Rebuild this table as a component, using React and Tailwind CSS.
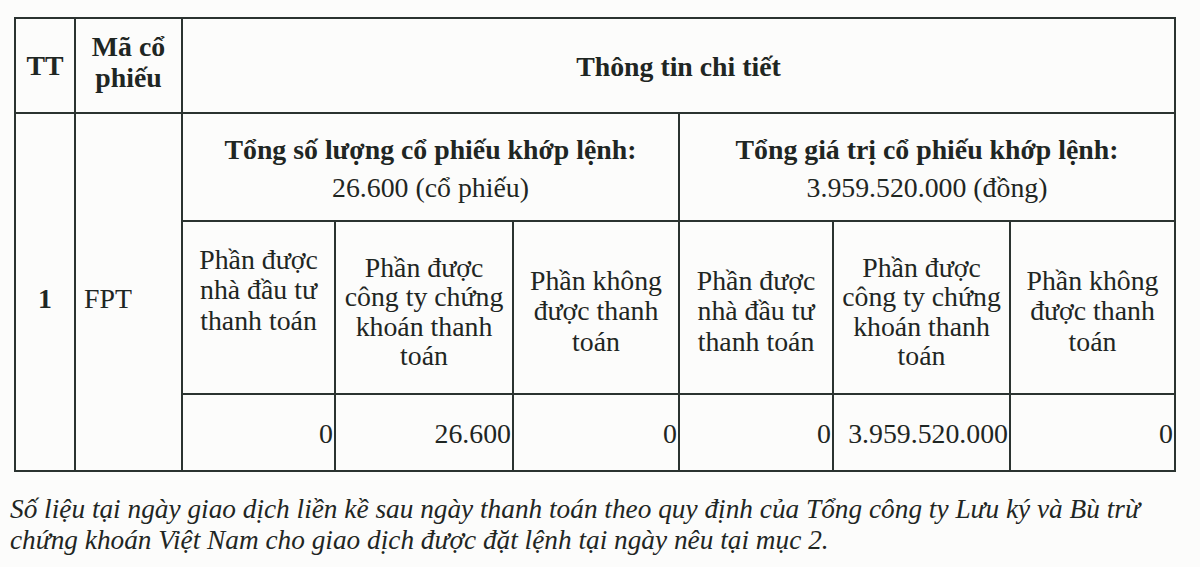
export default function App() {
  const b = "border-2 border-[#2b3330]";
  const hdr = ["Phần được nhà đầu tư thanh toán", "Phần được công ty chứng khoán thanh toán", "Phần không được thanh toán"];
  const hdrLines = [
    ["Phần được", "nhà đầu tư", "thanh toán"],
    ["Phần được", "công ty chứng", "khoán thanh", "toán"],
    ["Phần không", "được thanh", "toán"],
  ];
  const vals = ["0", "26.600", "0", "0", "3.959.520.000", "0"];
  return (
    <div
      className="w-[1200px] h-[567px] bg-[#fcfcfb] text-[#1f2623] overflow-hidden"
      style={{ fontFamily: '"Liberation Serif", "Times New Roman", serif' }}
    >
      <div className="pt-[17px] pl-[14px]">
        <table className="table-fixed border-collapse w-[1161px] text-[27.8px] leading-[29px]">
          <colgroup>
            <col className="w-[60px]" />
            <col className="w-[107px]" />
            <col className="w-[153px]" />
            <col className="w-[178px]" />
            <col className="w-[166px]" />
            <col className="w-[154px]" />
            <col className="w-[177px]" />
            <col className="w-[165px]" />
          </colgroup>
          <tbody>
            <tr className="h-[95px]">
              <td className={`${b} text-center align-middle font-bold`}>TT</td>
              <td className={`${b} text-center align-middle font-bold leading-[31px] pb-[8px]`}>
                Mã cổ
                <br />
                phiếu
              </td>
              <td colSpan={6} className={`${b} text-center align-middle font-bold pt-[2px]`}>
                Thông tin chi tiết
              </td>
            </tr>
            <tr className="h-[108px]">
              <td rowSpan={3} className={`${b} text-center align-middle font-bold pt-[12px]`}>
                1
              </td>
              <td rowSpan={3} className={`${b} align-middle pl-[8px] pt-[12px]`}>
                FPT
              </td>
              <td colSpan={3} className={`${b} text-center align-middle leading-[38px] pt-[4px]`}>
                <span className="font-bold">Tổng số lượng cổ phiếu khớp lệnh:</span>
                <br />
                26.600 (cổ phiếu)
              </td>
              <td colSpan={3} className={`${b} text-center align-middle leading-[38px] pt-[4px]`}>
                <span className="font-bold">Tổng giá trị cổ phiếu khớp lệnh:</span>
                <br />
                3.959.520.000 (đồng)
              </td>
            </tr>
            <tr className="h-[173px]">
              {[0, 1, 2, 0, 1, 2].map((k, i) => (
                <td
                  key={i}
                  className={`${b} text-center align-middle ${i === 0 ? "pb-[34px]" : "pt-[8px]"}`}
                  title={hdr[k]}
                >
                  {hdrLines[k].map((l, j) => (
                    <div key={j} className={k === 1 ? "leading-[29.5px]" : "leading-[30.5px]"}>
                      {l}
                    </div>
                  ))}
                </td>
              ))}
            </tr>
            <tr className="h-[77px]">
              {vals.map((v, i) => (
                <td key={i} className={`${b} text-right align-middle pr-[1px] pt-[2px]`}>
                  {v}
                </td>
              ))}
            </tr>
          </tbody>
        </table>
      </div>
      <div className="pl-[10px] pt-[22px] italic text-[27.3px] leading-[31px] whitespace-nowrap">
        <div>
          Số liệu tại ngày giao dịch liền kề sau ngày thanh toán theo quy định của Tổng công ty Lưu ký và Bù trừ
        </div>
        <div>chứng khoán Việt Nam cho giao dịch được đặt lệnh tại ngày nêu tại mục 2.</div>
      </div>
    </div>
  );
}
